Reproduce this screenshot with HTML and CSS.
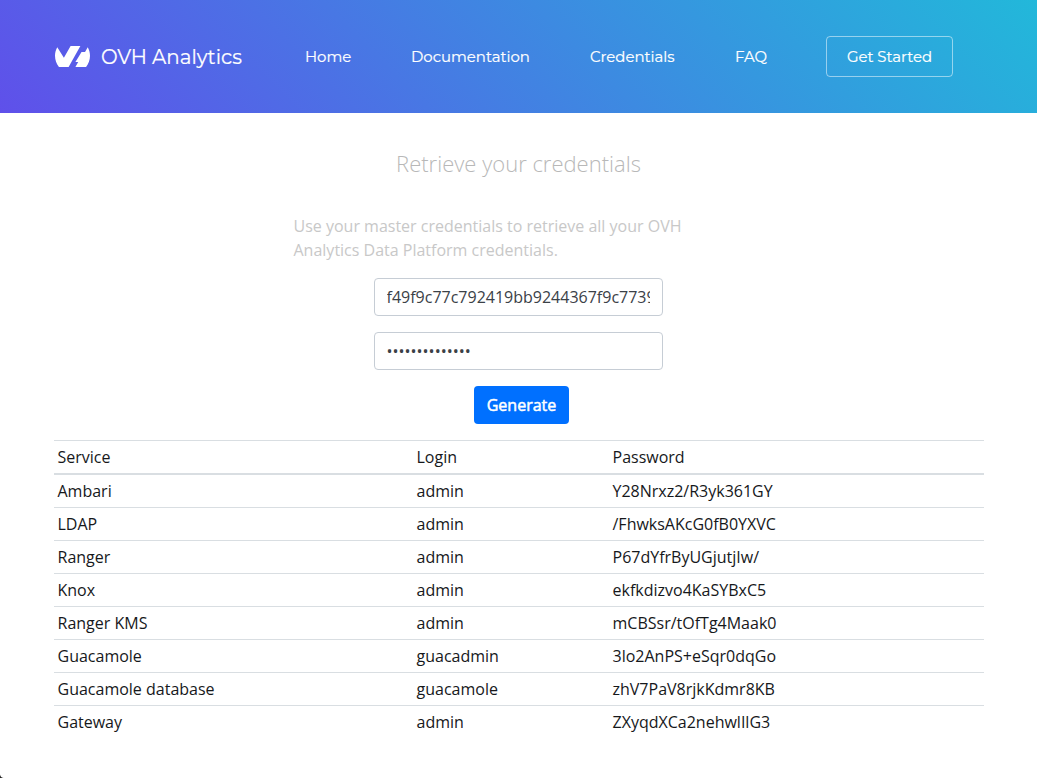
FILE: index.html
```html
<!DOCTYPE html>
<html lang="en">
<head>
<meta charset="utf-8">
<title>OVH Analytics</title>
<link rel="stylesheet" href="styles.css">
</head>
<body>
<header class="header">
  <a class="brand"><svg class="logo" viewBox="0 4.85 24 14.3" preserveAspectRatio="none"><path fill="#fff" d="M1.56 5.64C.57 7.39 0 9.4 0 11.56c0 2.88 1.01 5.52 2.71 7.59H9.34L17.4 4.85H10.7L6.1 12.9ZM20.6 9L22.44 5.65C23.43 7.39 24 9.4 24 11.56c0 2.88-1.02 5.52-2.71 7.59H14L15.9 15.8H14L18.2 9Z"/></svg><span class="brand-name">OVH Analytics</span></a>
  <nav class="nav"><a class="home">Home</a><a class="docs">Documentation</a><a class="creds">Credentials</a><a class="faq">FAQ</a></nav>
  <a class="start"><span>Get Started</span></a>
</header>
<main class="content">
  <h1 class="title"><span>Retrieve your credentials</span></h1>
  <p class="intro"><span class="intro-a">Use your master credentials to retrieve all your OVH</span><br><span class="intro-b">Analytics Data Platform credentials.</span></p>
  <form class="form">
    <input class="field" type="text" value="f49f9c77c792419bb9244367f9c7739f">
    <input class="field" type="password" value="abcdefghijklmn">
    <button class="generate" type="button">Generate</button>
  </form>
  <table class="table">
    <thead><tr><th class="service">Service</th><th class="login">Login</th><th>Password</th></tr></thead>
    <tbody>
      <tr><td>Ambari</td><td>admin</td><td>Y28Nrxz2/R3yk361GY</td></tr>
      <tr><td>LDAP</td><td>admin</td><td>/FhwksAKcG0fB0YXVC</td></tr>
      <tr><td>Ranger</td><td>admin</td><td>P67dYfrByUGjutjIw/</td></tr>
      <tr><td>Knox</td><td>admin</td><td>ekfkdizvo4KaSYBxC5</td></tr>
      <tr><td>Ranger KMS</td><td>admin</td><td>mCBSsr/tOfTg4Maak0</td></tr>
      <tr><td>Guacamole</td><td>guacadmin</td><td>3lo2AnPS+eSqr0dqGo</td></tr>
      <tr><td>Guacamole database</td><td>guacamole</td><td>zhV7PaV8rjkKdmr8KB</td></tr>
      <tr><td>Gateway</td><td>admin</td><td>ZXyqdXCa2nehwlIlG3</td></tr>
    </tbody>
  </table>
</main>
<div class="window-corner"></div>
</body>
</html>
```
FILE: styles.css
```css
* { box-sizing: border-box; }
body { margin: 0; background: #fff; color: #16181b; font: 16px/24px "Open Sans", sans-serif; overflow: hidden; }
.header { height: 113px; display: flex; align-items: center; padding-left: 55px; background: linear-gradient(45deg, #5f50ea, #22b8da); color: #fff; font-family: Montserrat, "Open Sans", sans-serif; white-space: nowrap; -webkit-text-stroke: .2px #fff; }
.brand { display: flex; align-items: center; width: 250px; gap: 11px; font-size: 19.85px; }
.logo { width: 35px; height: 21px; }
.nav { display: flex; font-size: 14.9px; width: 521px; }
.home { width: 106px; }
.docs { width: 179px; }
.creds { width: 145px; }
.start { width: 127px; height: 41px; border: 1px solid rgba(255,255,255,.5); border-radius: 4px; font-size: 14.9px; line-height: 41px; text-align: center; }
.title { margin: 0; padding-top: 36px; font-size: 22px; line-height: 28px; font-weight: 300; color: #b8b8b8; text-align: center; }
.intro { margin: 37px 0 0 293.5px; color: #c8c8c8; white-space: nowrap; }
.form { display: flex; flex-direction: column; width: 289px; margin: 16px 0 0 374px; gap: 16px; }
.field { width: 289px; height: 38px; padding: 6px 12px 6px 11.5px; border: 1px solid #c6cdd5; border-radius: 4px; font: 16px/24px "Open Sans", sans-serif; color: #3b4147; }
.generate { width: 95px; height: 38px; margin-left: 100px; border: 0; border-radius: 4px; background: #0070ff; color: #fff; font: 400 16px/24px "Open Sans", sans-serif; -webkit-text-stroke: .5px #fff; padding: 0; }
.table { width: 930px; margin: 16px 0 0 54px; border-collapse: collapse; table-layout: fixed; }
.table th, .table td { height: 33px; padding: 4px 4px 4px 3.5px; line-height: 24px; border-top: 1px solid #d9dee2; font-weight: 400; text-align: left; }
.table thead th { border-bottom: 2px solid #d9dee2; }
.service { width: 359px; }
.login { width: 196px; }
/* rounded corner of the window frame */
.window-corner { position: absolute; left: 0; bottom: 0; width: 4px; height: 4px; background: radial-gradient(circle at 100% 0, transparent 3.5px, #222 4.5px); }
```
